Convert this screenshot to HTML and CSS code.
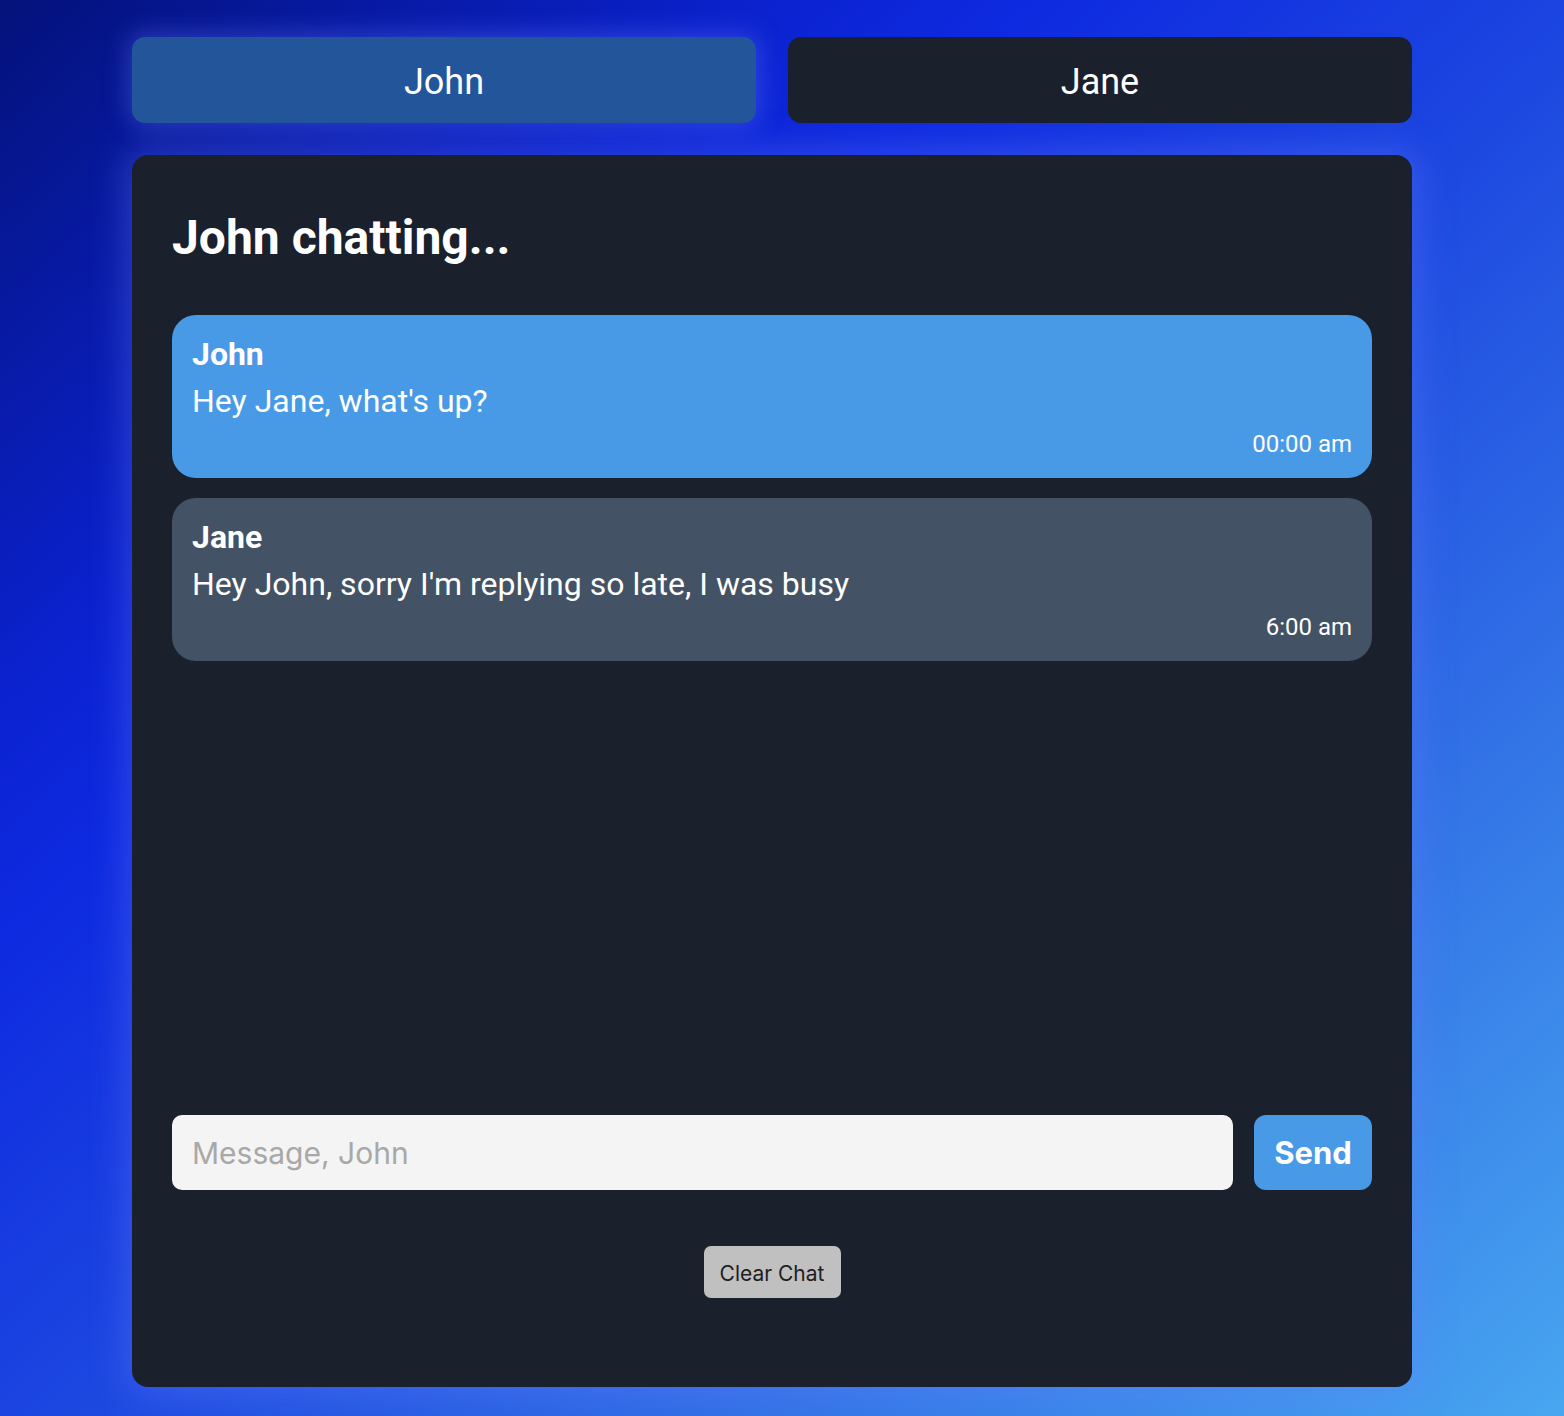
FILE: index.html
```html
<!DOCTYPE html>
<html lang="en">
<head>
<meta charset="utf-8">
<title>Chat</title>
<link rel="stylesheet" href="styles.css">
</head>
<body>
<div class="app">
  <div class="switcher">
    <button class="user-btn active">John</button>
    <button class="user-btn">Jane</button>
  </div>
  <main class="panel">
    <h1 class="title">John chatting...</h1>
    <div class="messages">
      <div class="msg msg-blue">
        <div class="msg-name">John</div>
        <div class="msg-text">Hey Jane, what's up?</div>
        <div class="msg-time">00:00 am</div>
      </div>
      <div class="msg msg-gray">
        <div class="msg-name">Jane</div>
        <div class="msg-text">Hey John, sorry I'm replying so late, I was busy</div>
        <div class="msg-time">6:00 am</div>
      </div>
    </div>
    <form class="composer">
      <input class="composer-input" type="text" placeholder="Message, John">
      <button class="send-btn" type="button">Send</button>
    </form>
    <div class="clear-row">
      <button class="clear-btn" type="button">Clear Chat</button>
    </div>
  </main>
</div>
</body>
</html>
```

FILE: styles.css
```css
html, body {
  margin: 0;
  padding: 0;
}

body {
  min-height: 100vh;
  background: linear-gradient(to bottom right, #04127a 0%, #0b22d0 25%, #0e2ae0 33%, #1b44e0 50%, #3170e6 73%, #48a6f0 100%);
  font-family: Roboto, "Liberation Sans", sans-serif;
  color: #fff;
}

.app {
  box-sizing: border-box;
  width: 1412px;
  padding: 37px 0 29px 132px;
}

.switcher {
  display: flex;
  gap: 32px;
}

.user-btn {
  flex: 1;
  height: 86px;
  padding: 3px 0 0;
  border: none;
  border-radius: 13px;
  background: #1a202c;
  color: #fff;
  font-family: Roboto, "Liberation Sans", sans-serif;
  font-size: 36px;
  font-weight: 400;
  cursor: pointer;
}

.user-btn.active {
  background: #22559a;
  box-shadow: 0 0 24px 4px rgba(110, 130, 255, 0.35);
}

.panel {
  box-sizing: border-box;
  margin-top: 32px;
  height: 1232px;
  display: flex;
  flex-direction: column;
  padding: 40px 40px 89px;
  background: #1a202c;
  border-radius: 16px;
  box-shadow: 0 0 36px 6px rgba(110, 130, 255, 0.35);
}

.title {
  margin: 15px 0 49px;
  font-size: 48px;
  font-weight: 700;
  line-height: 56px;
}

.messages {
  flex: 1;
  display: flex;
  flex-direction: column;
  gap: 20px;
}

.msg {
  padding: 21px 20px 20px;
  border-radius: 24px;
}

.msg-blue {
  background: #4899e6;
}

.msg-gray {
  background: #435264;
}

.msg-name {
  font-size: 32px;
  font-weight: 700;
  line-height: 37px;
  margin-bottom: 10px;
}

.msg-text {
  font-size: 32px;
  line-height: 37px;
  margin-bottom: 10px;
}

.msg-time {
  text-align: right;
  font-size: 24px;
  line-height: 28px;
}

.composer {
  display: flex;
  gap: 21px;
  margin: 0 0 56px;
}

.composer-input {
  flex: 1;
  box-sizing: border-box;
  height: 75px;
  padding: 0 20px;
  border: none;
  border-radius: 10px;
  background: #f4f4f4;
  font-family: Inter, "Liberation Sans", sans-serif;
  font-size: 30px;
  color: #222;
  outline: none;
}

.composer-input::placeholder {
  color: #a8a8a8;
}

.send-btn {
  box-sizing: border-box;
  width: 118px;
  height: 75px;
  border: none;
  border-radius: 12px;
  background: #4899e6;
  color: #fff;
  font-family: Inter, "Liberation Sans", sans-serif;
  font-size: 31px;
  font-weight: 700;
  padding: 0;
  cursor: pointer;
}

.clear-row {
  display: flex;
  justify-content: center;
}

.clear-btn {
  box-sizing: border-box;
  width: 137px;
  height: 52px;
  border: none;
  border-radius: 7px;
  background: #c0c0c0;
  color: #1e1e1e;
  font-family: Inter, "Liberation Sans", sans-serif;
  font-size: 21px;
  padding: 2px 0 0;
  cursor: pointer;
}
```
